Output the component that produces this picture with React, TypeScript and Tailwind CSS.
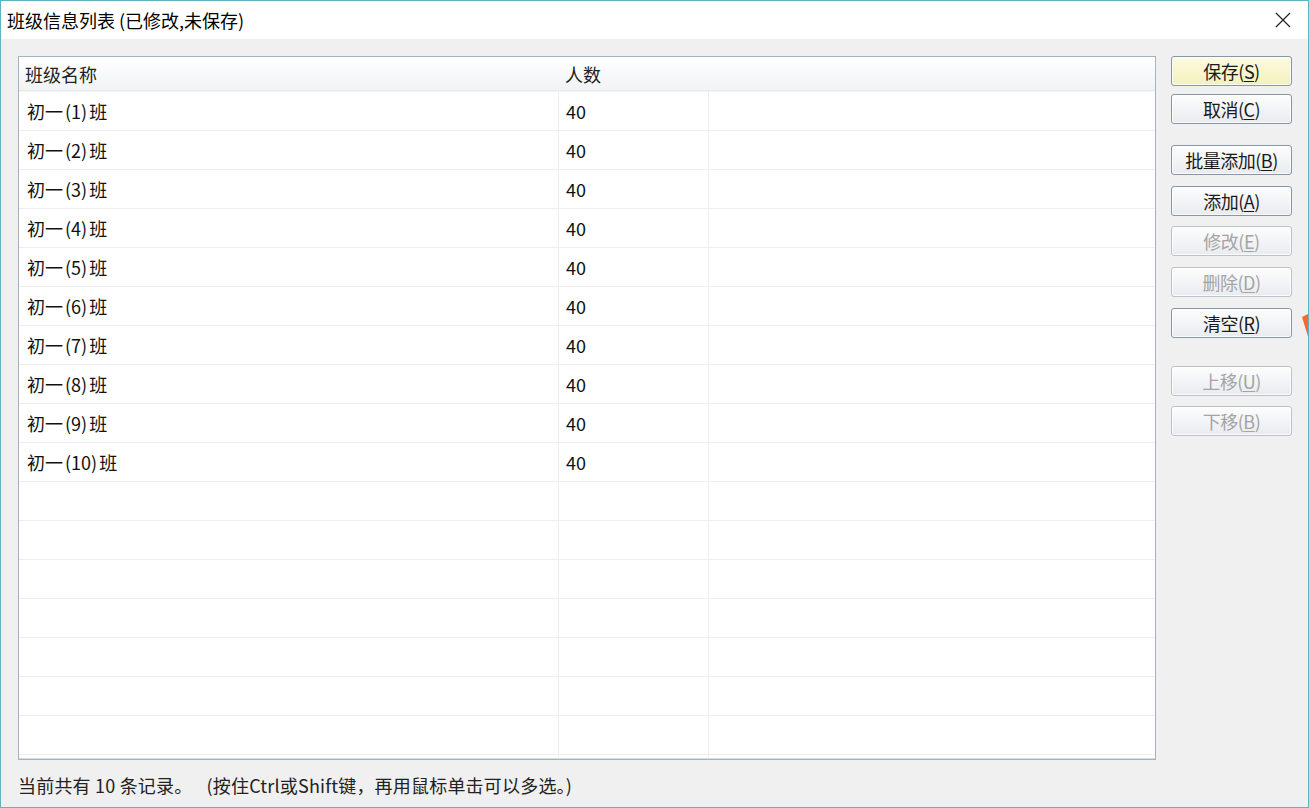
import React from "react";

const font = { fontFamily: '"Noto Sans CJK SC", "Noto Sans", sans-serif' };

type Btn = { label: string; key: string; disabled?: boolean; primary?: boolean; mt: string };

const buttons: Btn[] = [
  { label: "保存", key: "S", primary: true, mt: "mt-0" },
  { label: "取消", key: "C", mt: "mt-[8px]" },
  { label: "批量添加", key: "B", mt: "mt-[21px]" },
  { label: "添加", key: "A", mt: "mt-[11px]" },
  { label: "修改", key: "E", disabled: true, mt: "mt-[10px]" },
  { label: "删除", key: "D", disabled: true, mt: "mt-[11px]" },
  { label: "清空", key: "R", mt: "mt-[11px]" },
  { label: "上移", key: "U", disabled: true, mt: "mt-[28px]" },
  { label: "下移", key: "B", disabled: true, mt: "mt-[10px]" },
];

const rows = Array.from({ length: 18 }, (_, i) => (i < 10 ? { n: i + 1, count: "40" } : null));

function Button({ b }: { b: Btn }) {
  const bg = b.primary
    ? "bg-gradient-to-b from-[#fbfbe0] to-[#f3f1bc]"
    : "bg-gradient-to-b from-[#fdfdfd] to-[#e9ebef]";
  const color = b.disabled ? "text-[#a4a4a4] border-[#b9c3cd]" : "text-[#1a1a1a] border-[#8496a8]";
  return (
    <div
      className={`${b.mt} h-[30px] w-[121px] rounded-[3px] border ${bg} ${color} flex items-center justify-center text-[18px] leading-none tracking-[-0.5px] shadow-[inset_0_0_0_1px_rgba(255,255,255,0.8)]`}
    >
      {b.label}(<span className="underline underline-offset-2">{b.key}</span>)
    </div>
  );
}

export default function App() {
  return (
    <div className="w-[1309px] h-[808px] overflow-hidden relative bg-[#f0f0f0] border border-[#5fb3c3] flex flex-col" style={font}>
      <div className="h-[38px] bg-white flex items-center justify-between pl-[6px] pr-[16px] shrink-0">
        <span className="text-[18px] leading-none text-black">班级信息列表 (已修改,未保存)</span>
        <svg width="16" height="16" viewBox="0 0 16 16" className="mr-[1px]">
          <path d="M1 1 L15 15 M15 1 L1 15" stroke="#222" strokeWidth="1.2" />
        </svg>
      </div>
      <div className="flex pt-[17px] pl-[17px] pr-[16px]">
        <div className="w-[1138px] h-[704px] border border-[#a5b2c0] bg-white overflow-hidden shadow-[inset_0_-1px_0_#d5dbe2]">
          <div className="h-[34px] flex items-center bg-gradient-to-b from-white to-[#f2f3f5] border-b border-[#e6e8eb] text-[18px] leading-none text-[#222]">
            <div className="w-[540px] pl-[6px]">班级名称</div>
            <div className="pl-[6px]">人数</div>
          </div>
          <div className="h-[1px] bg-[#f6f6f6]" />
          {rows.map((r, i) => (
            <div key={i} className="h-[39px] flex border-b border-[#eeeeee] text-[18px] leading-none text-[#111]">
              <div className="w-[540px] pl-[8px] flex items-center border-r border-[#eeeeee]">
                {r && (
                  <span>
                    初一<span className="pl-[2px]">(</span>{r.n}<span className="pr-[2px]">)</span>班
                  </span>
                )}
              </div>
              <div className="w-[150px] pl-[7px] flex items-center border-r border-[#eeeeee]">{r?.count}</div>
              <div className="flex-1" />
            </div>
          ))}
        </div>
        <div className="ml-[15px] flex flex-col">
          {buttons.map((b, i) => (
            <Button key={i} b={b} />
          ))}
        </div>
      </div>
      <div className="pl-[17px] pt-[16px] text-[18px] leading-none text-[#222] flex">
        <span className="tracking-[0.2px]">当前共有 10 条记录。</span>
        <span className="pl-[14px] tracking-[0.2px]">(按住Ctrl或Shift键，再用鼠标单击可以多选。)</span>
      </div>
      <svg className="absolute left-[1300px] top-[312px]" width="9" height="30" viewBox="0 0 9 30">
        <path d="M1 4 L9 0 L9 30 Z" fill="#f26b2b" />
      </svg>
    </div>
  );
}
